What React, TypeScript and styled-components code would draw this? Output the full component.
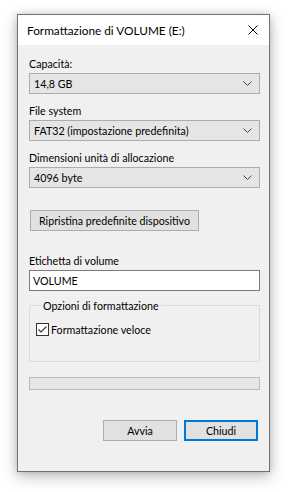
import React from "react";
import styled, { createGlobalStyle } from "styled-components";

const Global = createGlobalStyle`
  html, body { margin: 0; padding: 0; background: #ffffff; }
  body { font-family: Lato, "Open Sans", sans-serif; font-size: 10.7px; color: #000; }
  * { box-sizing: border-box; }
`;

const Page = styled.div`
  width: 291px;
  height: 492px;
  padding: 14px 0 0 17px;
`;

const Window = styled.div`
  width: 253px;
  height: 458px;
  border: 1px solid #707070;
  background: #f0f0f0;
  box-shadow: 0 4px 14px rgba(0, 0, 0, 0.28), 0 0 6px rgba(0, 0, 0, 0.12);
  display: flex;
  flex-direction: column;
`;

const TitleBar = styled.div`
  height: 30px;
  background: #ffffff;
  display: flex;
  align-items: center;
  justify-content: space-between;
  padding: 0 10px 0 9px;
`;

const Title = styled.span`
  font-size: 11.8px;
  line-height: 15px;
  padding-top: 1px;
`;

const Close = styled.svg`
  width: 10px;
  height: 10px;
  margin-right: 1px;
`;

const Body = styled.div`
  flex: 1;
  display: flex;
  flex-direction: column;
  padding: 11px 9px 0 11px;
`;

const Label = styled.div<{ $top?: number }>`
  line-height: 15px;
  margin-top: ${(p) => p.$top ?? 0}px;
  margin-bottom: 2px;
  white-space: nowrap;
`;

const Combo = styled.div`
  height: 21px;
  border: 1px solid #acacac;
  background: #e5e5e5;
  display: flex;
  align-items: center;
  justify-content: space-between;
  padding: 0 7px 0 4px;
  line-height: 15px;
`;

const Chevron = styled.svg`
  width: 9px;
  height: 5px;
`;

const Button = styled.div<{ $default?: boolean }>`
  height: 21px;
  border: ${(p) => (p.$default ? "2px solid #0078d7" : "1px solid #adadad")};
  background: #e1e1e1;
  display: flex;
  align-items: center;
  justify-content: center;
  line-height: 15px;
  white-space: nowrap;
`;

const ResetButton = styled(Button)`
  align-self: flex-start;
  width: 169px;
  margin: 22px 0 0 1px;
`;

const Input = styled.div`
  height: 21px;
  border: 1px solid #7a7a7a;
  background: #ffffff;
  display: flex;
  align-items: center;
  padding: 0 3px;
  line-height: 15px;
`;

const Group = styled.fieldset`
  margin: 7px 0 0 0;
  padding: 9px 6px 0 6px;
  height: 64px;
  border: 1px solid #dcdcdc;
  min-width: 0;
`;

const Legend = styled.legend`
  padding: 0 2px;
  margin-left: 5px;
  line-height: 15px;
`;

const CheckRow = styled.div`
  display: flex;
  align-items: center;
  gap: 2px;
  line-height: 15px;
`;

const CheckBox = styled.div`
  width: 13px;
  height: 13px;
  border: 1px solid #333333;
  background: #ffffff;
  display: flex;
  align-items: center;
  justify-content: center;
`;

const Progress = styled.div`
  height: 13px;
  margin-top: 15px;
  border: 1px solid #bcbcbc;
  background: #e6e6e6;
`;

const Footer = styled.div`
  display: flex;
  justify-content: flex-end;
  gap: 7px;
  margin-top: 30px;
  padding-right: 2px;
`;

const FooterButton = styled(Button)`
  width: 74px;
`;

export default function App() {
  return (
    <>
      <Global />
      <Page>
        <Window>
          <TitleBar>
            <Title>Formattazione di VOLUME (E:)</Title>
            <Close viewBox="0 0 10 10">
              <path d="M0.5 0.5 L9.5 9.5 M9.5 0.5 L0.5 9.5" stroke="#000" strokeWidth="1" fill="none" />
            </Close>
          </TitleBar>
          <Body>
            <Label>Capacità:</Label>
            <Combo>
              <span>14,8 GB</span>
              <Chevron viewBox="0 0 9 5">
                <path d="M0.5 0.5 L4.5 4.5 L8.5 0.5" stroke="#444" strokeWidth="1" fill="none" />
              </Chevron>
            </Combo>
            <Label $top={9}>File system</Label>
            <Combo>
              <span>FAT32 (impostazione predefinita)</span>
              <Chevron viewBox="0 0 9 5">
                <path d="M0.5 0.5 L4.5 4.5 L8.5 0.5" stroke="#444" strokeWidth="1" fill="none" />
              </Chevron>
            </Combo>
            <Label $top={9}>Dimensioni unità di allocazione</Label>
            <Combo>
              <span>4096 byte</span>
              <Chevron viewBox="0 0 9 5">
                <path d="M0.5 0.5 L4.5 4.5 L8.5 0.5" stroke="#444" strokeWidth="1" fill="none" />
              </Chevron>
            </Combo>
            <ResetButton>Ripristina predefinite dispositivo</ResetButton>
            <Label $top={22}>Etichetta di volume</Label>
            <Input>VOLUME</Input>
            <Group>
              <Legend>Opzioni di formattazione</Legend>
              <CheckRow>
                <CheckBox>
                  <svg width="11" height="11" viewBox="0 0 11 11">
                    <path d="M1.5 5.5 L4 8 L9.5 2.5" stroke="#333" strokeWidth="1.1" fill="none" />
                  </svg>
                </CheckBox>
                <span>Formattazione veloce</span>
              </CheckRow>
            </Group>
            <Progress />
            <Footer>
              <FooterButton>Avvia</FooterButton>
              <FooterButton $default>Chiudi</FooterButton>
            </Footer>
          </Body>
        </Window>
      </Page>
    </>
  );
}
